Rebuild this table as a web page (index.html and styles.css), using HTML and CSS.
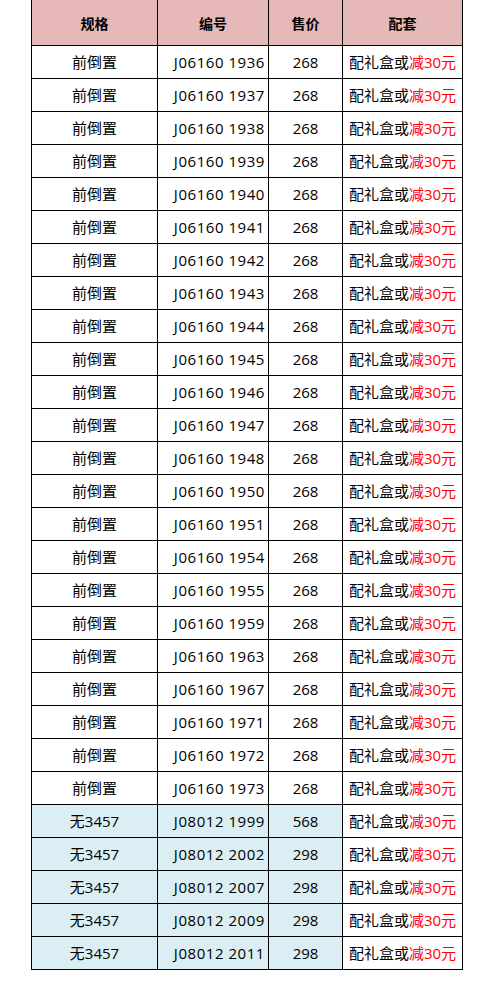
FILE: index.html
```html
<!DOCTYPE html>
<html lang="zh">
<head>
<meta charset="utf-8">
<link rel="stylesheet" href="styles.css">
</head>
<body>
<table class="sheet">
<colgroup><col class="c1"><col class="c2"><col class="c3"><col class="c4"></colgroup>
<thead>
<tr class="head"><th>规格</th><th>编号</th><th>售价</th><th>配套</th></tr>
</thead>
<tbody>
<tr><td>前倒置</td><td class="code">J06160 1936</td><td>268</td><td class="gift">配礼盒或<span class="red">减30元</span></td></tr>
<tr><td>前倒置</td><td class="code">J06160 1937</td><td>268</td><td class="gift">配礼盒或<span class="red">减30元</span></td></tr>
<tr><td>前倒置</td><td class="code">J06160 1938</td><td>268</td><td class="gift">配礼盒或<span class="red">减30元</span></td></tr>
<tr><td>前倒置</td><td class="code">J06160 1939</td><td>268</td><td class="gift">配礼盒或<span class="red">减30元</span></td></tr>
<tr><td>前倒置</td><td class="code">J06160 1940</td><td>268</td><td class="gift">配礼盒或<span class="red">减30元</span></td></tr>
<tr><td>前倒置</td><td class="code">J06160 1941</td><td>268</td><td class="gift">配礼盒或<span class="red">减30元</span></td></tr>
<tr><td>前倒置</td><td class="code">J06160 1942</td><td>268</td><td class="gift">配礼盒或<span class="red">减30元</span></td></tr>
<tr><td>前倒置</td><td class="code">J06160 1943</td><td>268</td><td class="gift">配礼盒或<span class="red">减30元</span></td></tr>
<tr><td>前倒置</td><td class="code">J06160 1944</td><td>268</td><td class="gift">配礼盒或<span class="red">减30元</span></td></tr>
<tr><td>前倒置</td><td class="code">J06160 1945</td><td>268</td><td class="gift">配礼盒或<span class="red">减30元</span></td></tr>
<tr><td>前倒置</td><td class="code">J06160 1946</td><td>268</td><td class="gift">配礼盒或<span class="red">减30元</span></td></tr>
<tr><td>前倒置</td><td class="code">J06160 1947</td><td>268</td><td class="gift">配礼盒或<span class="red">减30元</span></td></tr>
<tr><td>前倒置</td><td class="code">J06160 1948</td><td>268</td><td class="gift">配礼盒或<span class="red">减30元</span></td></tr>
<tr><td>前倒置</td><td class="code">J06160 1950</td><td>268</td><td class="gift">配礼盒或<span class="red">减30元</span></td></tr>
<tr><td>前倒置</td><td class="code">J06160 1951</td><td>268</td><td class="gift">配礼盒或<span class="red">减30元</span></td></tr>
<tr><td>前倒置</td><td class="code">J06160 1954</td><td>268</td><td class="gift">配礼盒或<span class="red">减30元</span></td></tr>
<tr><td>前倒置</td><td class="code">J06160 1955</td><td>268</td><td class="gift">配礼盒或<span class="red">减30元</span></td></tr>
<tr><td>前倒置</td><td class="code">J06160 1959</td><td>268</td><td class="gift">配礼盒或<span class="red">减30元</span></td></tr>
<tr><td>前倒置</td><td class="code">J06160 1963</td><td>268</td><td class="gift">配礼盒或<span class="red">减30元</span></td></tr>
<tr><td>前倒置</td><td class="code">J06160 1967</td><td>268</td><td class="gift">配礼盒或<span class="red">减30元</span></td></tr>
<tr><td>前倒置</td><td class="code">J06160 1971</td><td>268</td><td class="gift">配礼盒或<span class="red">减30元</span></td></tr>
<tr><td>前倒置</td><td class="code">J06160 1972</td><td>268</td><td class="gift">配礼盒或<span class="red">减30元</span></td></tr>
<tr><td>前倒置</td><td class="code">J06160 1973</td><td>268</td><td class="gift">配礼盒或<span class="red">减30元</span></td></tr>
<tr class="blue"><td>无3457</td><td class="code">J08012 1999</td><td>568</td><td class="gift">配礼盒或<span class="red">减30元</span></td></tr>
<tr class="blue"><td>无3457</td><td class="code">J08012 2002</td><td>298</td><td class="gift">配礼盒或<span class="red">减30元</span></td></tr>
<tr class="blue"><td>无3457</td><td class="code">J08012 2007</td><td>298</td><td class="gift">配礼盒或<span class="red">减30元</span></td></tr>
<tr class="blue"><td>无3457</td><td class="code">J08012 2009</td><td>298</td><td class="gift">配礼盒或<span class="red">减30元</span></td></tr>
<tr class="blue"><td>无3457</td><td class="code">J08012 2011</td><td>298</td><td class="gift">配礼盒或<span class="red">减30元</span></td></tr>
</tbody>
</table>
</body>
</html>
```
FILE: styles.css
```css
html, body {
  margin: 0;
  padding: 0;
  background: #ffffff;
}
body {
  font-family: "Open Sans", "Noto Sans CJK SC", sans-serif;
  color: #000000;
}
.sheet {
  margin-left: 31px;
  border-collapse: collapse;
  table-layout: fixed;
  width: 431px;
}
.c1 { width: 126px; }
.c2 { width: 111px; }
.c3 { width: 74px; }
.c4 { width: 120px; }
.sheet th, .sheet td {
  border: 1px solid #000000;
  padding: 0;
  text-align: center;
  vertical-align: middle;
  white-space: nowrap;
  overflow: hidden;
}
.head th {
  border-top: none;
  background: #e6b8b7;
  height: 45px;
  font-family: "Noto Sans CJK SC", sans-serif;
  font-size: 14px;
  font-weight: bold;
}
.sheet td {
  height: 32px;
  font-size: 15px;
  line-height: 20px;
}
.sheet td.code {
  text-align: right;
  padding-right: 3px;
  letter-spacing: 0.55px;
}
.blue td {
  background: #daeef3;
}
.blue td.gift {
  background: #ffffff;
}
.red {
  color: #ff0000;
}
```
